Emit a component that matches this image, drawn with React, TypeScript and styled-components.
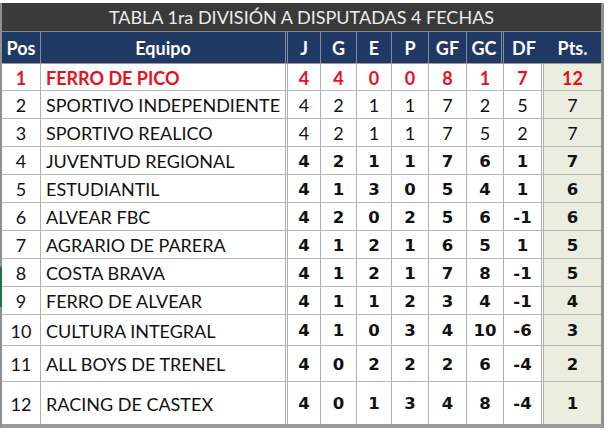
import React from "react";
import styled, { createGlobalStyle, css } from "styled-components";

type Kind = "top" | "plain" | "bold";

interface TeamRow {
  pos: number;
  team: string;
  stats: number[];
  pts: number;
  kind: Kind;
  h: number;
}

const COLS = "39px 247px 33px 36px 35px 37px 38px 37px 40px 57px";
const SEPS: ("single" | "double" | "none")[] = [
  "single", "double", "single", "single", "single", "single", "single", "double", "none",
];

const rows: TeamRow[] = [
  { pos: 1, team: "FERRO DE PICO", stats: [4, 4, 0, 0, 8, 1, 7], pts: 12, kind: "top", h: 27 },
  { pos: 2, team: "SPORTIVO INDEPENDIENTE", stats: [4, 2, 1, 1, 7, 2, 5], pts: 7, kind: "plain", h: 28 },
  { pos: 3, team: "SPORTIVO REALICO", stats: [4, 2, 1, 1, 7, 5, 2], pts: 7, kind: "plain", h: 28 },
  { pos: 4, team: "JUVENTUD REGIONAL", stats: [4, 2, 1, 1, 7, 6, 1], pts: 7, kind: "bold", h: 28 },
  { pos: 5, team: "ESTUDIANTIL", stats: [4, 1, 3, 0, 5, 4, 1], pts: 6, kind: "bold", h: 28 },
  { pos: 6, team: "ALVEAR FBC", stats: [4, 2, 0, 2, 5, 6, -1], pts: 6, kind: "bold", h: 28 },
  { pos: 7, team: "AGRARIO DE PARERA", stats: [4, 1, 2, 1, 6, 5, 1], pts: 5, kind: "bold", h: 28 },
  { pos: 8, team: "COSTA BRAVA", stats: [4, 1, 2, 1, 7, 8, -1], pts: 5, kind: "bold", h: 28 },
  { pos: 9, team: "FERRO DE ALVEAR", stats: [4, 1, 1, 2, 3, 4, -1], pts: 4, kind: "bold", h: 28 },
  { pos: 10, team: "CULTURA INTEGRAL", stats: [4, 1, 0, 3, 4, 10, -6], pts: 3, kind: "bold", h: 31 },
  { pos: 11, team: "ALL BOYS DE TRENEL", stats: [4, 0, 2, 2, 2, 6, -4], pts: 2, kind: "bold", h: 36 },
  { pos: 12, team: "RACING DE CASTEX", stats: [4, 0, 1, 3, 4, 8, -4], pts: 1, kind: "bold", h: 42 },
];

const headers = ["Pos", "Equipo", "J", "G", "E", "P", "GF", "GC", "DF", "Pts."];

export default function App() {
  return (
    <Page>
      <GlobalStyle />
      <Sheet>
        <Title>TABLA 1ra DIVISIÓN A DISPUTADAS 4 FECHAS</Title>
        <HeadRow>
          {headers.map((h, i) => (
            <HeadCell key={h} $sep={SEPS[i] || "none"}>
              {h}
            </HeadCell>
          ))}
        </HeadRow>
        {rows.map((r, idx) => (
          <Row key={r.pos} $h={r.h} $last={idx === rows.length - 1}>
            <Cell $sep="single" $kind={r.kind} $role="pos">
              {r.pos}
            </Cell>
            <Cell $sep="double" $kind={r.kind} $role="name" $left>
              {r.team}
            </Cell>
            {r.stats.map((s, i) => (
              <Cell key={i} $sep={i === 6 ? "double" : "single"} $kind={r.kind} $role="num">
                {s}
              </Cell>
            ))}
            <Cell $sep="none" $kind={r.kind} $role="num" $pts>
              {r.pts}
            </Cell>
          </Row>
        ))}
      </Sheet>
      <Selection />
    </Page>
  );
}

const GlobalStyle = createGlobalStyle`
  html, body {
    margin: 0;
    padding: 0;
    background: #ffffff;
  }
`;

const Page = styled.div`
  position: relative;
  width: 608px;
  height: 432px;
  box-sizing: border-box;
  padding-top: 3px;
  background: #ffffff;
  overflow: hidden;
`;

const Selection = styled.div`
  position: absolute;
  left: 0;
  top: 267px;
  width: 2px;
  height: 40px;
  background: #217346;
`;

const Sheet = styled.div`
  width: 604px;
  box-sizing: border-box;
  border-left: 2px solid #8f8f8f;
  border-right: 3px solid #8f8f8f;
  border-bottom: 4px solid #9a9a9a;
`;

const Title = styled.div`
  height: 28px;
  line-height: 29px;
  background: #3a3a3a;
  color: #ececec;
  font-family: Lato, "Open Sans", sans-serif;
  font-size: 18px;
  text-align: center;
  border-bottom: 1px solid #8a8a8a;
`;

const HeadRow = styled.div`
  display: grid;
  grid-template-columns: ${COLS};
  height: 32px;
  background: #203864;
  border-bottom: 1px solid #9a9a9a;
  box-sizing: border-box;
`;

const sepCss = (sep: string, color: string) => {
  if (sep === "single") return css`border-right: 1px solid ${color};`;
  if (sep === "double") return css`border-right: 3px double ${color};`;
  return css``;
};

const HeadCell = styled.div<{ $sep: string }>`
  box-sizing: border-box;
  display: flex;
  align-items: center;
  justify-content: center;
  padding-top: 1px;
  color: #ffffff;
  font-family: Lato, "Open Sans", sans-serif;
  font-weight: 700;
  font-size: 18px;
  ${(p) => sepCss(p.$sep, "#7d8ba3")}
`;

const Row = styled.div<{ $h: number; $last?: boolean }>`
  display: grid;
  grid-template-columns: ${COLS};
  height: ${(p) => p.$h}px;
  box-sizing: border-box;
  border-bottom: ${(p) => (p.$last ? "none" : "1px solid #b8b8b8")};
`;

const Cell = styled.div<{
  $sep: string;
  $kind: Kind;
  $role: "pos" | "name" | "num";
  $left?: boolean;
  $pts?: boolean;
}>`
  box-sizing: border-box;
  display: flex;
  align-items: center;
  justify-content: ${(p) => (p.$left ? "flex-start" : "center")};
  padding: ${(p) => (p.$left ? "1px 0 0 5px" : "1px 0 0 0")};
  white-space: nowrap;
  overflow: hidden;
  background: ${(p) => (p.$pts ? "#ebeedf" : "#ffffff")};
  color: #111111;
  font-family: Lato, "Open Sans", sans-serif;
  font-size: 18px;
  font-weight: 400;
  ${(p) => sepCss(p.$sep, "#b0b0b0")}
  ${(p) =>
    p.$kind === "top" &&
    css`
      color: #e8101a;
      font-weight: 700;
    `}
  ${(p) =>
    p.$kind === "bold" &&
    p.$role === "num" &&
    css`
      font-family: "DejaVu Sans", Verdana, sans-serif;
      font-weight: 700;
      font-size: 16.5px;
    `}
`;
